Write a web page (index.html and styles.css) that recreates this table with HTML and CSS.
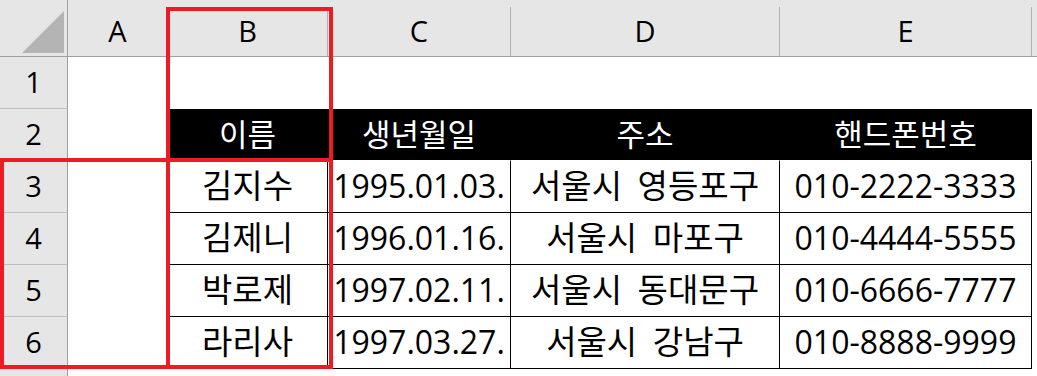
FILE: index.html
```html
<!DOCTYPE html>
<html lang="ko">
<head>
    <meta charset="UTF-8">
    <meta name="viewport" content="width=device-width, initial-scale=1.0">
    <title>연락처 시트</title>
    <link rel="stylesheet" href="styles.css">
</head>
<body>

    <div class="sheet">
        <div class="grid">
            <!-- Column headers -->
            <div class="corner"><div class="corner-tri"></div></div>
            <div class="col-head"><span>A</span></div>
            <div class="col-head"><span>B</span></div>
            <div class="col-head"><span>C</span></div>
            <div class="col-head"><span>D</span></div>
            <div class="col-head"><span>E</span></div>
            <div class="col-head rest"><span></span></div>

            <!-- Row 1 -->
            <div class="row-head">1</div>
            <div class="cell"></div>
            <div class="cell"></div>
            <div class="cell"></div>
            <div class="cell"></div>
            <div class="cell"></div>
            <div class="cell"></div>

            <!-- Row 2: table header -->
            <div class="row-head">2</div>
            <div class="cell"></div>
            <div class="cell th">이름</div>
            <div class="cell th">생년월일</div>
            <div class="cell th">주소</div>
            <div class="cell th">핸드폰번호</div>
            <div class="cell"></div>

            <!-- Row 3 -->
            <div class="row-head">3</div>
            <div class="cell"></div>
            <div class="cell td ko first">김지수</div>
            <div class="cell td">1995.01.03.</div>
            <div class="cell td ko">서울시 영등포구</div>
            <div class="cell td">010-2222-3333</div>
            <div class="cell"></div>

            <!-- Row 4 -->
            <div class="row-head">4</div>
            <div class="cell"></div>
            <div class="cell td ko first">김제니</div>
            <div class="cell td">1996.01.16.</div>
            <div class="cell td ko">서울시 마포구</div>
            <div class="cell td">010-4444-5555</div>
            <div class="cell"></div>

            <!-- Row 5 -->
            <div class="row-head">5</div>
            <div class="cell"></div>
            <div class="cell td ko first">박로제</div>
            <div class="cell td">1997.02.11.</div>
            <div class="cell td ko">서울시 동대문구</div>
            <div class="cell td">010-6666-7777</div>
            <div class="cell"></div>

            <!-- Row 6 -->
            <div class="row-head">6</div>
            <div class="cell"></div>
            <div class="cell td ko first">라리사</div>
            <div class="cell td">1997.03.27.</div>
            <div class="cell td ko">서울시 강남구</div>
            <div class="cell td">010-8888-9999</div>
            <div class="cell"></div>

            <!-- Row 7 (cut off) -->
            <div class="row-head"></div>
            <div class="cell"></div>
            <div class="cell"></div>
            <div class="cell"></div>
            <div class="cell"></div>
            <div class="cell"></div>
            <div class="cell"></div>
        </div>

        <!-- Highlight boxes -->
        <div class="mark mark-col"></div>
        <div class="mark mark-rows"></div>
    </div>

</body>
</html>
```

FILE: styles.css
```css
body {
    margin: 0;
    background-color: #fff;
    font-family: "Open Sans", "Noto Sans CJK KR", sans-serif;
    overflow: hidden;
}
.sheet {
    position: relative;
    width: 1037px;
    height: 376px;
    overflow: hidden;
}
.grid {
    display: grid;
    grid-template-columns: 68px 100px 160px 183px 269px 252px 1fr;
    grid-template-rows: 57px repeat(7, 52px);
}
.corner, .col-head {
    background-color: #e6e6e6;
    border-bottom: 1px solid #9f9f9f;
    box-sizing: border-box;
    display: flex;
    align-items: flex-end;
}
.corner {
    border-right: 1px solid #9f9f9f;
    justify-content: flex-end;
    padding: 0 3px 3px 0;
}
.corner-tri {
    width: 42px;
    height: 42px;
    background-color: #b4b4b4;
    clip-path: polygon(100% 0, 100% 100%, 0 100%);
}
.col-head span {
    display: block;
    width: 100%;
    height: 49px;
    line-height: 48px;
    text-align: center;
    font-size: 29px;
    color: #000;
    border-right: 1px solid #b1b1b1;
    box-sizing: border-box;
}
.col-head.rest span {
    border-right: none;
}
.row-head {
    background-color: #e6e6e6;
    border-right: 1px solid #9f9f9f;
    border-bottom: 1px solid #bdbdbd;
    box-sizing: border-box;
    font-size: 29px;
    text-align: center;
    line-height: 50px;
    color: #000;
}
.cell {
    box-sizing: border-box;
    border-right: 1px solid transparent;
    border-bottom: 1px solid transparent;
    font-size: 32px;
    text-align: center;
    line-height: 50px;
    white-space: nowrap;
    color: #000;
}
.th {
    background-color: #000;
    color: #fff;
    font-size: 31px;
    border-bottom-color: #fff;
}
.td {
    border-right-color: #000;
    border-bottom-color: #000;
}
/* hangul cells run a touch larger than the digits */
.td.ko {
    font-size: 33px;
    word-spacing: 7px;
}
.td.first {
    border-left: 1px solid #000;
    margin-left: -1px;
}
.mark {
    position: absolute;
    border: 4px solid #ed1c24;
    box-sizing: border-box;
    pointer-events: none;
}
.mark-col {
    left: 166px;
    top: 7px;
    width: 167px;
    height: 362px;
}
.mark-rows {
    left: 0;
    top: 158px;
    width: 333px;
    height: 211px;
}
```
